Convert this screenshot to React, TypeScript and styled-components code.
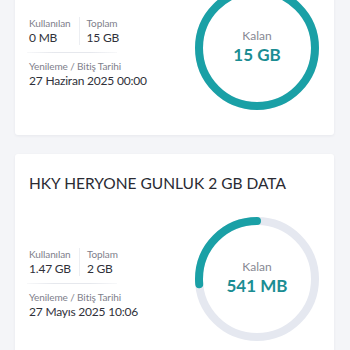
import styled, { createGlobalStyle } from "styled-components";

const GlobalStyle = createGlobalStyle`
  html, body {
    margin: 0;
    padding: 0;
    background: #f4f5f8;
    font-family: "Lato", "Noto Sans", sans-serif;
    overflow: hidden;
  }
`;

const Page = styled.div`
  display: flex;
  flex-direction: column;
  gap: 19px;
  padding: 0 16px 0 15px;
  margin-top: -77px;
`;

const Card = styled.section`
  background: #ffffff;
  border-radius: 3px;
  box-shadow: 0 1px 3px rgba(30, 40, 60, 0.06);
  padding: 18px 14px 24px 14px;
`;

const Title = styled.h2`
  margin: 0 0 22px;
  font-size: 15.5px;
  line-height: 22px;
  font-weight: 400;
  color: #2a2b33;
`;

const Body = styled.div`
  display: flex;
  align-items: center;
  justify-content: space-between;
`;

const Info = styled.div`
  display: flex;
  flex-direction: column;
  margin-top: 8px;
`;

const Pair = styled.div`
  display: flex;
`;

const Col = styled.div<{ $divided?: boolean }>`
  display: flex;
  flex-direction: column;
  padding: ${(p) => (p.$divided ? "0 0 0 7px" : "0 8px 0 0")};
  border-left: ${(p) => (p.$divided ? "1px solid #eceef2" : "none")};
`;

const Label = styled.span`
  font-size: 10px;
  line-height: 13px;
  letter-spacing: -0.1px;
  color: #7e808b;
`;

const Value = styled.span`
  font-size: 12px;
  line-height: 15px;
  letter-spacing: -0.2px;
  color: #30313a;
`;

const Rule = styled.div`
  width: 90px;
  height: 1px;
  margin: 7px 0 7px -2px;
  background: linear-gradient(90deg, rgba(230, 232, 237, 0.3), #e6e8ed 30%, #e6e8ed 70%, rgba(230, 232, 237, 0.3));
`;

const Gauge = styled.div`
  position: relative;
  width: 126px;
  height: 126px;
  flex-shrink: 0;
`;

const GaugeText = styled.div`
  position: absolute;
  inset: 0;
  display: flex;
  flex-direction: column;
  align-items: center;
  justify-content: center;
  padding-bottom: 3px;
`;

const Remain = styled.span`
  font-size: 12px;
  line-height: 16px;
  color: #878893;
`;

const Amount = styled.span`
  font-size: 17px;
  line-height: 21px;
  font-weight: 700;
  color: #1b8d93;
`;

type Pkg = {
  title?: string;
  used: string;
  total: string;
  date: string;
  left: string;
  ratio: number;
};

const packages: Pkg[] = [
  { title: "HKY HERYONE AYLIK 15 GB DATA", used: "0 MB", total: "15 GB", date: "27 Haziran 2025 00:00", left: "15 GB", ratio: 1 },
  { title: "HKY HERYONE GUNLUK 2 GB DATA", used: "1.47 GB", total: "2 GB", date: "27 Mayıs 2025 10:06", left: "541 MB", ratio: 541 / 2048 },
];

const Ring = ({ ratio }: { ratio: number }) => {
  const r = 58;
  const c = 2 * Math.PI * r;
  return (
    <svg width="126" height="126" viewBox="0 0 126 126">
      <circle cx="63" cy="63" r={r} fill="none" stroke="#e5e8f0" strokeWidth="8" />
      <circle
        cx="63"
        cy="63"
        r={r}
        fill="none"
        stroke="#1aa0a6"
        strokeWidth="8"
        strokeLinecap={ratio >= 1 ? "butt" : "round"}
        strokeDasharray={`${c * ratio} ${c}`}
        transform="rotate(-90 63 63) scale(1 -1) translate(0 -126)"
      />
    </svg>
  );
};

export default function App() {
  return (
    <>
      <GlobalStyle />
      <Page>
        {packages.map((p) => (
          <Card key={p.date}>
            <Title>{p.title}</Title>
            <Body>
              <Info>
                <Pair>
                  <Col>
                    <Label>Kullanılan</Label>
                    <Value>{p.used}</Value>
                  </Col>
                  <Col $divided>
                    <Label>Toplam</Label>
                    <Value>{p.total}</Value>
                  </Col>
                </Pair>
                <Rule />
                <Label>Yenileme / Bitiş Tarihi</Label>
                <Value>{p.date}</Value>
              </Info>
              <Gauge>
                <Ring ratio={p.ratio} />
                <GaugeText>
                  <Remain>Kalan</Remain>
                  <Amount>{p.left}</Amount>
                </GaugeText>
              </Gauge>
            </Body>
          </Card>
        ))}
      </Page>
    </>
  );
}
